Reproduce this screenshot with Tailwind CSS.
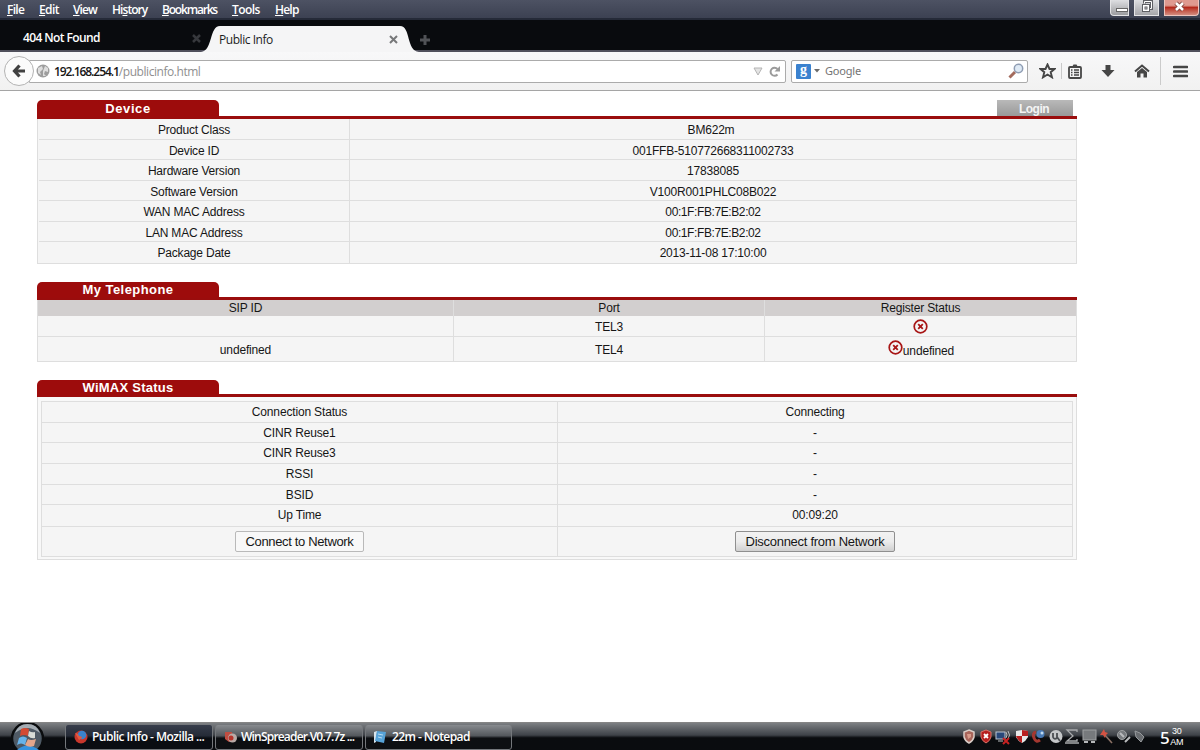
<!DOCTYPE html>
<html lang="en">
<head>
<meta charset="utf-8">
<title>Public Info</title>
<script src="https://cdn.jsdelivr.net/npm/@tailwindcss/browser@4"></script>
</head>
<body class="w-[1200px] h-[750px] overflow-hidden bg-white flex flex-col font-['Open_Sans',sans-serif] text-[11px]">

<!-- Menu bar -->
<header class="h-5 shrink-0 bg-gradient-to-b from-[#4d5263] to-[#3c4152] border-b-2 border-[#252a38] flex justify-between text-white font-semibold">
  <nav class="flex pl-[7px] leading-[20px] text-[12px] whitespace-nowrap">
    <span class="w-8 tracking-[-0.7px]"><u>F</u>ile</span>
    <span class="w-[34px] tracking-[-0.6px]"><u>E</u>dit</span>
    <span class="w-[39px] tracking-[-0.9px]"><u>V</u>iew</span>
    <span class="w-[50px] tracking-[-0.95px]">Hi<u>s</u>tory</span>
    <span class="w-[70px] tracking-[-1.2px]"><u>B</u>ookmarks</span>
    <span class="w-[43px] tracking-[-0.6px]"><u>T</u>ools</span>
    <span class="tracking-[-0.8px]"><u>H</u>elp</span>
  </nav>
  <div class="flex gap-[5px] pr-px">
    <div class="w-[19px] h-4 rounded-bl border border-t-0 border-[#e4e4e6] bg-gradient-to-b from-[#dedfe2] to-[#9c9da0] flex justify-end items-center"><i class="w-3 h-1 mt-1 border border-[#666] bg-white"></i></div>
    <div class="w-[25px] h-4 border border-t-0 border-[#e4e4e6] bg-gradient-to-b from-[#dedfe2] to-[#a5a6aa]">
      <svg class="mx-auto" width="15" height="15" fill="none"><path d="M5.500 3.500V1.500H12.500V8.500H10.500" stroke="#5e5f64" stroke-width="3"/><path d="M5.500 3.500V1.500H12.500V8.500H10.500" stroke="#fff"/><rect x="3.500" y="4.500" width="7" height="7" fill="#fff" stroke="#5e5f64"/><rect x="6" y="7" width="2" height="2" stroke="#5e5f64"/></svg>
    </div>
    <div class="w-[35px] h-4 rounded-br border border-t-0 border-[#edc5be] bg-gradient-to-b from-[#df9a90] from-35% via-[#b5281c] via-50% to-[#d38a7e]">
      <svg class="ml-[8px]" width="14" height="14"><path d="M3 3L10 10M10 3L3 10" stroke="#81463f" stroke-width="4.500"/><path d="M3 3L10 10M10 3L3 10" stroke="#fff" stroke-width="2.500"/></svg>
    </div>
  </div>
</header>

<!-- Tab strip -->
<div class="h-8 shrink-0 bg-[#090b0e] border-b-2 border-[#50505c] flex relative">
  <div class="w-[201px] pl-[23px] pt-[2px] flex items-center justify-between text-white font-semibold text-[12px]">
    <span class="tracking-[-0.6px] leading-[30px] mt-[4px]">404 Not Found</span>
    <svg width="9" height="9" class="mt-[5px]"><path d="M1 1L8 8M8 1L1 8" stroke="#36383c" stroke-width="2.500"/></svg>
  </div>
  <div class="w-[218px] h-8 relative shrink-0">
    <svg class="absolute top-[6px] left-0" width="218" height="26"><path d="M0 26C12 25 8 0 19 0H199C210 0 205 25 218 26Z" fill="#f5f5f6"/></svg>
    <div class="relative h-full pl-[18px] pr-[20px] pt-[7px] flex items-center justify-between text-[#1d1d1d] text-[12px]">
      <span class="tracking-[-0.45px] font-medium">Public Info</span>
      <svg width="9" height="9" class="mr-[1px]"><path d="M1 1L8 8M8 1L1 8" stroke="#77787a" stroke-width="2"/></svg>
    </div>
  </div>
  <svg width="12" height="12" class="mt-[14px]"><path d="M6 1V11M1 6H11" stroke="#505256" stroke-width="3"/></svg>
</div>

<!-- Navigation bar -->
<div class="h-[39px] shrink-0 bg-gradient-to-b from-[#f8f8f9] to-[#f1f1f1] border-b border-[#a5a5a5] flex items-center">
  <div class="relative z-10 w-[30px] h-[30px] ml-1 rounded-full border border-[#b3b3b3] bg-[#fbfbfb] flex items-center justify-center">
    <svg width="14" height="14"><path d="M7.500 1.500L2.500 7L7.500 12.500M3 7H13" fill="none" stroke="#414141" stroke-width="3.200"/></svg>
  </div>
  <div class="-ml-[5px] w-[757px] h-[23px] border border-[#ababab] bg-white rounded-r-[2px] flex items-center pl-[6px] pr-[4px]">
    <svg width="14" height="14"><circle cx="7" cy="7" r="6.500" fill="#9d9d9d"/><path d="M2 4L6 2L7 5L4 8L5 11L2 9ZM9 2L12 4L12 8L9 7L8 10L10 12L7 12L7 7Z" fill="#dedede"/></svg>
    <span class="ml-[4px] mt-px text-[12px] text-[#8f8f8f] leading-[20px] tracking-[-0.450px]"><b class="text-[#161616] font-semibold tracking-[-1.05px]">192.168.254.1</b>/publicinfo.html</span>
    <svg class="ml-auto" width="10" height="9"><path d="M1 1H9L5 8Z" fill="#e4e4e4" stroke="#b4b4b4"/></svg>
    <svg class="ml-[6px]" width="12" height="13"><path d="M8.500 9.500A4 4 0 1 1 8.500 4" fill="none" stroke="#9b9b9b" stroke-width="2"/><path d="M11 1V6.500H5.500Z" fill="#9b9b9b"/></svg>
  </div>
  <div class="ml-[5px] w-[237px] h-[23px] border border-[#ababab] bg-white rounded-[2px] flex items-center pl-1 pr-[3px]">
    <div class="w-[15px] h-[15px] bg-[#3b82cf] rounded-[1px] text-white text-[14px] leading-[11px] text-center font-bold font-['Liberation_Serif']">g</div>
    <svg class="ml-[3px]" width="6" height="4"><path d="M0 0H6L3 3.500Z" fill="#6b6b6b"/></svg>
    <span class="ml-[5px] mt-px text-[11px] text-[#737373] font-['Noto_Sans'] tracking-[-0.2px]">Google</span>
    <svg class="ml-auto" width="16" height="16"><path d="M1.500 14.500L7 9" stroke="#a36b5d" stroke-width="3"/><circle cx="10.500" cy="5.500" r="4.200" fill="#dfeaf5" stroke="#8f9db3" stroke-width="1.500"/></svg>
  </div>
  <svg class="ml-[11px]" width="17" height="16"><path d="M8.500 1.500L10.500 6H15.500L11.700 9.200L13 14.300L8.500 11.500L4 14.300L5.300 9.200L1.500 6H6.500Z" fill="none" stroke="#464646" stroke-width="1.900"/></svg>
  <i class="w-px h-4 bg-[#c9c9c9] ml-[5px]"></i>
  <svg class="ml-[6px]" width="14" height="15"><rect x="1" y="3" width="12" height="11" rx="1" fill="none" stroke="#464646" stroke-width="1.800"/><path d="M4 3L5.500 0.500H8.500L10 3Z" fill="#464646"/><path d="M3 6H4.500M6 6H11M3 8.500H4.500M6 8.500H11M3 11H4.500M6 11H11" stroke="#464646" stroke-width="1.300"/></svg>
  <svg class="ml-[19px]" width="14" height="14"><path d="M4.500 1H9.500V6H13.500L7 13L.5 6H4.500Z" fill="#464646"/></svg>
  <svg class="ml-[19px]" width="16" height="14"><path d="M1 7.500L8 1.500L15 7.500" fill="none" stroke="#464646" stroke-width="2"/><path d="M3 8L8 4L13 8V13.500H9.500V9.500H6.500V13.500H3Z" fill="#464646"/></svg>
  <i class="w-px h-7 bg-[#cbcbcb] ml-[10px]"></i>
  <svg class="ml-[12px]" width="15" height="13"><path d="M1.200 2H14M1.200 6.500H14M1.200 11H14" stroke="#464646" stroke-width="2.700" stroke-linecap="round"/></svg>
</div>

<!-- Page -->
<main class="flex-1 pl-[37px] pt-[9px] font-['Liberation_Sans',sans-serif] text-[12px] text-[#161616] text-center tracking-[-0.16px]">
  <section class="w-[1040px]">
    <div class="h-[19px] border-b-[3px] border-[#9a0d0d] flex justify-between">
      <h2 class="w-[182px] h-[17px] rounded-t-[5px] bg-[#9d0c0c] text-white font-bold text-[13px] leading-[18px] tracking-[0.6px]">Device</h2>
      <div class="w-[76px] h-4 mr-1 bg-gradient-to-b from-[#b9b9b9] to-[#999] text-[#f4f4f4] font-bold leading-[18px]"><span class="pr-[2px] tracking-[-0.5px]">Login</span></div>
    </div>
    <div class="h-[145px] grid grid-cols-[311px_1fr] grid-rows-7 border border-t-0 border-[#dedede] bg-[#f5f5f5] leading-[22px] pl-px *:border-b *:border-[#dedede] *:odd:border-r *:nth-last-[-n+2]:border-b-0 tracking-[-0.2px]">
      <div>Product Class</div><div class="pr-1">BM622m</div>
      <div>Device ID</div><div>001FFB-510772668311002733</div>
      <div>Hardware Version</div><div>17838085</div>
      <div>Software Version</div><div>V100R001PHLC08B022</div>
      <div>WAN MAC Address</div><div class="tracking-[-0.4px]">00:1F:FB:7E:B2:02</div>
      <div>LAN MAC Address</div><div class="tracking-[-0.4px]">00:1F:FB:7E:B2:02</div>
      <div>Package Date</div><div>2013-11-08 17:10:00</div>
    </div>
  </section>

  <section class="w-[1040px] mt-[18px]">
    <div class="h-[18px] border-b-[3px] border-[#9a0d0d]">
      <h2 class="w-[182px] h-4 rounded-t-[5px] bg-[#9d0c0c] text-white font-bold text-[13px] leading-[16px] tracking-[0.45px]">My Telephone</h2>
    </div>
    <div class="grid grid-cols-[416px_311px_1fr] grid-rows-[16px_21px_24px] border border-t-0 border-[#dedede] bg-[#f5f5f5] *:border-[#dedede] *:nth-[3n+1]:border-r *:nth-[3n+2]:border-r">
      <div class="bg-[#d2cfcf] leading-[17px]">SIP ID</div><div class="bg-[#d2cfcf] leading-[17px]">Port</div><div class="bg-[#d2cfcf] leading-[17px]">Register Status</div>
      <div class="border-b"></div><div class="border-b leading-[22px]">TEL3</div>
      <div class="border-b flex justify-center items-center"><svg width="15" height="15"><circle cx="7.500" cy="7.500" r="6.300" fill="none" stroke="#a81616" stroke-width="1.700"/><path d="M5.200 5.200L9.800 9.800M9.800 5.200L5.200 9.800" stroke="#a81616" stroke-width="1.800"/></svg></div>
      <div class="leading-[26px]">undefined</div><div class="leading-[26px]">TEL4</div>
      <div class="flex justify-center leading-[29px] pl-px"><svg class="mt-[3px]" width="15" height="15"><circle cx="7.500" cy="7.500" r="6.300" fill="none" stroke="#a81616" stroke-width="1.700"/><path d="M5.200 5.200L9.800 9.800M9.800 5.200L5.200 9.800" stroke="#a81616" stroke-width="1.800"/></svg><span>undefined</span></div>
    </div>
  </section>

  <section class="w-[1040px] mt-[18px]">
    <div class="h-[17px] border-b-[3px] border-[#9a0d0d]">
      <h2 class="w-[182px] h-4 rounded-t-[5px] bg-[#9d0c0c] text-white font-bold text-[13px] leading-[16px] tracking-[0.25px]">WiMAX Status</h2>
    </div>
    <div class="border border-t-0 border-[#dedede] bg-[#f8f8f8] px-[3px] pt-1 pb-[2px]">
      <div class="grid grid-cols-[516px_1fr] grid-rows-[repeat(5,20.700px)_21.500px_29px] border border-[#dedede] bg-[#f5f5f5] leading-[21px] *:border-b *:border-[#dedede] *:odd:border-r *:nth-last-[-n+2]:border-b-0">
        <div>Connection Status</div><div>Connecting</div>
        <div>CINR Reuse1</div><div>-</div>
        <div>CINR Reuse3</div><div>-</div>
        <div>RSSI</div><div>-</div>
        <div>BSID</div><div>-</div>
        <div>Up Time</div><div>00:09:20</div>
        <div class="flex items-center justify-center"><button class="w-[129px] h-[21px] border border-[#b9b9b9] rounded-[2px] bg-[#f8f8f8] text-[13px] leading-[19px] tracking-[-0.35px] whitespace-nowrap">Connect to Network</button></div>
        <div class="flex items-center justify-center"><button class="w-[160px] h-[21px] border border-[#8f8f8f] rounded-[2px] bg-gradient-to-b from-[#f2f2f2] via-[#ececec] via-50% to-[#d0d0d0] text-[13px] leading-[19px] tracking-[-0.28px] whitespace-nowrap">Disconnect from Network</button></div>
      </div>
    </div>
  </section>
</main>

<!-- Taskbar -->
<footer class="h-7 shrink-0 bg-gradient-to-b from-[#7d8083] via-[#3e4248] via-45% to-[#0a0c0f] to-55% border-t border-[#858585] flex text-white font-semibold text-[12px]">
  <svg class="ml-[11px] mr-[21px] shrink-0" width="33" height="27"><circle cx="16.500" cy="15.500" r="15.500" fill="#4e5964" stroke="#0a0c0e" stroke-width="2.500"/><path d="M4 10Q7 1 16.500 1T29 10Q22 5 16.500 5T4 10Z" fill="#a4acb3"/><path d="M6 27Q16 18 28 27Z" fill="#3593df"/><path d="M10 6Q14 4 18 6L17 13Q13 11 9 13Z" fill="#d34a32"/><path d="M18 8Q21 10 24 9L24 15Q20 16 17 13Z" fill="#d8dbd6"/><path d="M8 15Q12 12 16 15L14 22Q10 19 6 22Z" fill="#66b3ea"/><path d="M17 16Q20 18 25 16L23 23Q18 25 14 22Z" fill="#e3a68c"/></svg>
  <div class="w-[148px] h-[26px] mt-px border border-[#74777b] rounded-[3px] bg-gradient-to-b from-[#373d4b] via-[#252b37] via-45% to-[#0a0d12] to-55% flex items-center pl-[8px] pb-px whitespace-nowrap">
    <svg class="mr-[4px]" width="14" height="14"><circle cx="7" cy="7" r="6.500" fill="#c9372c"/><circle cx="8" cy="5" r="4.300" fill="#3a83cc"/><path d="M1 3Q4 3 5 6Q8 6 8 8L5 10Z" fill="#e05b42"/></svg>
    <span class="tracking-[-0.52px]">Public Info - Mozilla ...</span>
  </div>
  <div class="ml-[2px] w-[148px] h-[26px] mt-px border border-[#74777b] rounded-[3px] bg-gradient-to-b from-[#888b8f] via-[#54585d] via-45% to-[#0d0f12] to-55% flex items-center pl-[8px] pb-px whitespace-nowrap">
    <svg class="mr-[3px]" width="14" height="14"><path d="M1 2H8L9 9L5 12L1 9Z" fill="#c04d41"/><circle cx="8.500" cy="8" r="4.500" fill="#b9aaa6"/><circle cx="7" cy="8" r="2.500" fill="#b7352c"/></svg>
    <span class="tracking-[-0.8px]">WinSpreader.V0.7.7z ...</span>
  </div>
  <div class="ml-[2px] w-[147px] h-[26px] mt-px border border-[#74777b] rounded-[3px] bg-gradient-to-b from-[#888b8f] via-[#54585d] via-45% to-[#0d0f12] to-55% flex items-center pl-[7px] pb-px whitespace-nowrap">
    <svg class="mr-[5px]" width="14" height="14"><path d="M1 2L4 1L3 12L1 13Z" fill="#d8e4ec"/><path d="M4 1L13 2L11 13L2 11Z" fill="#57a3d8"/><path d="M5 4L10 5M5 7L9 8" stroke="#b8dcf3"/></svg>
    <span class="tracking-[-0.6px]">22m - Notepad</span>
  </div>
  <div class="ml-auto flex items-center gap-[2.500px]">
    <svg width="14" height="15"><path d="M7 1L12 3V8Q11 12 7 14Q3 12 2 8V3Z" fill="#a8655a" stroke="#d9cdc7" stroke-width="1.500"/><path d="M5 5H9V8L6 10Z" fill="#d99b8b"/></svg>
    <svg width="14" height="15"><path d="M7 1L12 3V8Q11 12 7 14Q3 12 2 8V3Z" fill="#b61e1e" stroke="#d97268"/><path d="M5 5L9 9M9 5L5 9" stroke="#fff" stroke-width="1.800"/></svg>
    <svg width="17" height="16"><rect x="1" y="3" width="9" height="7" fill="#28487a" stroke="#bcc6d2"/><path d="M3 12H8M11 3Q13 6 11 9M13 2Q16 6 13 10" stroke="#b9bcc0" fill="none"/><path d="M8 9L14 15M14 9L8 15" stroke="#c72222" stroke-width="2"/></svg>
    <svg width="14" height="15"><path d="M7 1L13 2V8Q11 12 7 14Q3 12 1 8V2Z" fill="#e8e8e8"/><path d="M7 1L13 2V7H7ZM7 7V14Q3 12 1 7Z" fill="#b82020"/></svg>
    <svg width="15" height="15"><path d="M5 3Q1 4 3 9T9 11" stroke="#a43730" stroke-width="3" fill="none"/><circle cx="9.500" cy="5" r="4" fill="#4779b5"/><circle cx="11" cy="4" r="1.500" fill="#bed8ee"/></svg>
    <svg width="14" height="15"><circle cx="7" cy="7.500" r="6.500" fill="#c5c7c9"/><path d="M4 4V8Q5 11 8 9V4M8 8L11 12" stroke="#4b4e52" stroke-width="1.800" fill="none"/></svg>
    <svg width="14" height="15"><path d="M12 3V1H2L8 7L2 12H12V10M0 14H14" stroke="#a9abad" stroke-width="1.300" fill="none"/></svg>
    <svg width="15" height="15"><rect x="1" y="1" width="13" height="10" fill="#777a7d" stroke="#a0a2a4"/><path d="M2 13H6M9 13H13" stroke="#b6b8ba" stroke-width="2"/></svg>
    <svg width="14" height="15"><path d="M5 5L13 14" stroke="#8b7266" stroke-width="1.600"/><path d="M5 0L6 3L9 4L7 6L6 9L4 6L1 6L3 3Z" fill="#d35343"/></svg>
    <svg width="15" height="15"><circle cx="6" cy="6" r="4.500" fill="#777a7e" stroke="#a0a3a5"/><path d="M4 4L8 8M9 13L14 8" stroke="#b9bbbd" stroke-width="2"/></svg>
    <svg width="14" height="15"><path d="M2 2L7 4L11 8L8 13L3 8Z" fill="#686b6f" stroke="#989b9e"/></svg>
  </div>
  <div class="ml-[13px] w-[40px] flex items-center gap-px font-medium">
    <span class="text-[17px] leading-none mt-[2px] font-['Noto_Sans'] tracking-[-0.5px]">5</span>
    <div class="text-[9px] leading-[11px] tracking-[-0.3px] text-center font-['Liberation_Sans']"><div>30</div><div>AM</div></div>
  </div>
</footer>
</body>
</html>
